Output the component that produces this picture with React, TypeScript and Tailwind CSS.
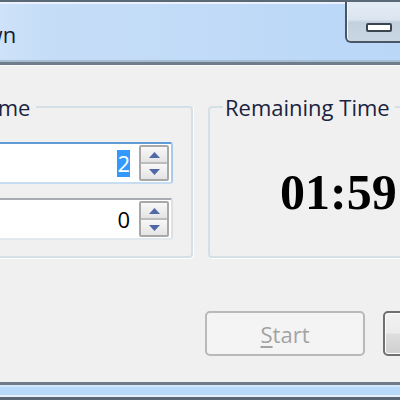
import clsx from "clsx"

function SpinArrow({ up }: { up?: boolean }) {
  return (
    <svg width="11" height="6" viewBox="0 0 11 6">
      <path d={up ? "M0 6 L5.5 0 L11 6 Z" : "M0 0 L11 0 L5.5 6 Z"} fill="#5068a6" />
    </svg>
  )
}

function SpinBox({ value, focused }: { value: string; focused?: boolean }) {
  return (
    <div
      className={clsx(
        "ml-auto flex h-[42px] w-[200px] shrink-0 items-center rounded-[3px] border-2 bg-white",
        focused
          ? "border-[#a9cbe9] border-t-[#5f9cd6] border-b-[#c6ddf1]"
          : "border-[#dde1e6] border-t-[#a9abb2] border-b-[#e3e8ed]"
      )}
    >
      <div className="flex-1 pr-[9px] text-right">
        <span
          className={clsx(
            "inline-block leading-[27px]",
            focused ? "bg-[#3399ff] text-white" : "text-black"
          )}
        >
          {value}
        </span>
      </div>
      <div className="mr-[2px] flex h-[36px] w-[30px] flex-col rounded-[2px] border-2 border-[#a8a8a8]">
        <div className="flex flex-1 items-center justify-center border-b border-[#bdbdbd] bg-[linear-gradient(#f8f8f8,#e4e4e4)]">
          <SpinArrow up />
        </div>
        <div className="flex flex-1 items-center justify-center border-t border-[#bdbdbd] bg-[linear-gradient(#f8f8f8,#e4e4e4)]">
          <SpinArrow />
        </div>
      </div>
    </div>
  )
}

export default function App() {
  return (
    <div className="h-[400px] w-[400px] overflow-hidden bg-[#f0f0f0] font-['Open_Sans','Noto_Sans',sans-serif] text-[22px]">
      <div className="-ml-[120px] flex h-full w-[760px] shrink-0 flex-col">
        {/* title bar */}
        <div className="flex h-[60px] shrink-0 border-t-2 border-[#5b6876] bg-[linear-gradient(90deg,#c9e0f7_0%,#d9eafb_7%,#c6ddf7_22%,#bcd8f8_60%,#b8d6f9_100%)] shadow-[inset_0_2px_0_#eaf3fd]">
          <div className="w-[465px] shrink-0 whitespace-nowrap pl-[17px] pt-[18px] leading-[28px] text-[#141e33]">Countdown</div>
          <div className="h-[41px] w-[90px] shrink-0 rounded-bl-[6px] border-2 border-t-0 border-[#4a5663] bg-[linear-gradient(#e4ecf5_0%,#dbe5f0_45%,#c3d0de_52%,#c9d6e4_100%)] pl-[19px] pt-[21px] shadow-[inset_1px_0_0_#f4f8fc]">
            <div className="h-[9px] w-[26px] rounded-[2px] border-2 border-[#3b4550] bg-white" />
          </div>
        </div>
        <div className="h-[6px] shrink-0 border-t-2 border-b border-t-[#a6bdd4] border-b-[#fbfbfb] bg-[#6f7d8b]" />

        {/* client area */}
        <div className="flex flex-1 flex-col pl-[48px]">
          <div className="mt-[27px] flex gap-[15px]">
            <fieldset className="h-[165px] w-[265px] shrink-0 rounded-[4px] border-2 border-[#d5dfe6] pl-[10px] pr-[18px] shadow-[1px_1px_0_#fff]">
              <legend className="whitespace-nowrap pl-[2px] pr-[6px] leading-[28px] text-[#1a2340]">Set Time</legend>
              <div className="mt-[21px] flex flex-col gap-[14px]">
                <SpinBox value="2" focused />
                <SpinBox value="0" />
              </div>
            </fieldset>
            <fieldset className="h-[165px] w-[265px] shrink-0 rounded-[4px] border-2 border-[#d5dfe6] pl-[13px] shadow-[1px_1px_0_#fff]">
              <legend className="whitespace-nowrap pl-[2px] pr-[5px] leading-[28px] text-[#1a2340]">Remaining Time</legend>
              <div className="mt-[43px] whitespace-nowrap pl-[57px] font-['Liberation_Serif',serif] text-[50px] font-bold leading-[56px] text-black">
                01:59
              </div>
            </fieldset>
          </div>

          <div className="mt-[53px] flex gap-[18px] pl-[277px]">
            <button
              disabled
              className="h-[45px] w-[160px] shrink-0 rounded-[5px] border-2 border-[#b9b9b9] bg-[#f4f4f4] leading-[28px] text-[#a3a3a3]"
            >
              <span className="underline underline-offset-[3px]">S</span>tart
            </button>
            <button className="h-[45px] w-[160px] shrink-0 rounded-[5px] border-2 border-[#707070] bg-[linear-gradient(#f2f2f2_0%,#ebebeb_48%,#dddddd_52%,#cfcfcf_100%)] leading-[28px] text-black shadow-[inset_0_0_0_1px_#fcfcfc]">
              <span className="underline underline-offset-[3px]">S</span>top
            </button>
          </div>
        </div>

        {/* bottom frame */}
        <div className="h-[18px] shrink-0 border-t-[3px] border-[#6f7b88] bg-[linear-gradient(#d2e7fb_0px,#d2e7fb_2px,#b9d9fb_2px,#b9d9fb_10px,#e6f1fc_10px,#e6f1fc_12px,#5a6674_12px)]" />
      </div>
    </div>
  )
}
